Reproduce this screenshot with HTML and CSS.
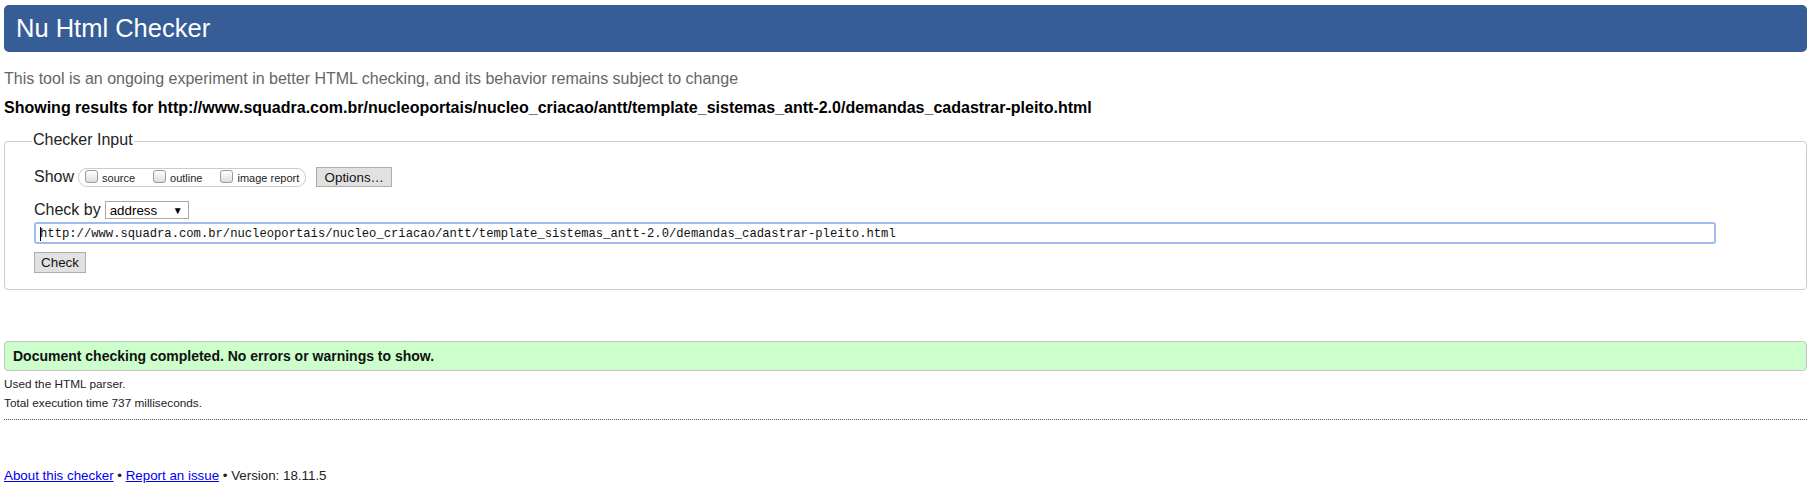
FILE: index.html
```html
<!DOCTYPE html>
<html lang="en">
<head>
<meta charset="utf-8">
<title>Nu Html Checker</title>
<link rel="stylesheet" href="styles.css">
</head>
<body>
<h1 class="title">Nu Html Checker</h1>
<p class="intro">This tool is an ongoing experiment in better HTML checking, and its behavior remains subject to change</p>
<p class="results-for">Showing results for http://www.squadra.com.br/nucleoportais/nucleo_criacao/antt/template_sistemas_antt-2.0/demandas_cadastrar-pleito.html</p>
<fieldset class="checker">
  <legend class="checker-legend">Checker Input</legend>
  <div class="row show-row">
    <span class="lbl">Show</span>
    <span class="opts">
      <span class="opt"><span class="cb"></span>source</span>
      <span class="opt"><span class="cb"></span>outline</span>
      <span class="opt"><span class="cb"></span>image report</span>
    </span>
    <span class="btn btn-options">Options…</span>
  </div>
  <div class="row by-row">
    <span class="lbl">Check by</span>
    <span class="select">address<span class="arrow">▼</span></span>
  </div>
  <div class="url"><span class="caret"></span>http://www.squadra.com.br/nucleoportais/nucleo_criacao/antt/template_sistemas_antt-2.0/demandas_cadastrar-pleito.html</div>
  <div class="row"><span class="btn btn-check">Check</span></div>
</fieldset>
<p class="success">Document checking completed. No errors or warnings to show.</p>
<p class="details">Used the HTML parser.</p>
<p class="details stats">Total execution time 737 milliseconds.</p>
<p class="footer"><a href="#" class="link">About this checker</a> • <a href="#" class="link">Report an issue</a> • Version: 18.11.5</p>
</body>
</html>
```
FILE: styles.css
```css
html, body {
  background: #fff;
}
body {
  margin: 0;
  padding: 5px 4px 0 4px;
  font-family: "Liberation Sans", Arial, sans-serif;
  color: #000;
  font-size: 16px;
}
.title {
  margin: 0;
  height: 47px;
  line-height: 46px;
  padding: 0 12px;
  background: #365d95;
  color: #fff;
  font-weight: normal;
  font-size: 25.5px;
  border-radius: 5px;
}
.intro {
  margin: 17px 0 0;
  line-height: 20px;
  color: #666;
}
.results-for {
  margin: 9px 0 0;
  line-height: 20px;
  font-weight: bold;
}
.checker {
  margin: 13px 0 0;
  padding: 0 28px 16px 29px;
  border: 1px solid #ccc;
  border-radius: 4px;
  min-width: 0;
}
.checker-legend {
  padding: 0 1px 2px;
  margin-left: -2px;
  line-height: 18px;
  color: #222;
}
.row {
  display: flex;
  align-items: center;
}
.show-row {
  margin-top: 16px;
  height: 20px;
}
.lbl {
  line-height: 20px;
  color: #222;
}
.opts {
  display: flex;
  align-items: flex-start;
  margin-left: 4px;
  height: 17px;
  padding: 0 6px 0 6px;
  border: 1px solid #ccc;
  border-radius: 9px;
  gap: 18px;
}
.opt {
  display: flex;
  align-items: flex-start;
  font-size: 11px;
  line-height: 17px;
  padding-top: 1px;
  color: #222;
}
.cb {
  width: 11px;
  height: 11px;
  margin: 0 4px 0 0;
  border: 1px solid #9a9a9a;
  border-radius: 3px;
  background: linear-gradient(#fff, #dcdcdc);
}
.btn {
  display: inline-flex;
  align-items: center;
  justify-content: center;
  box-sizing: border-box;
  border: 1px solid #adadad;
  background: #e1e1e1;
  color: #111;
  font-size: 13.33px;
}
.btn-options {
  margin-left: 10px;
  width: 76px;
  height: 20px;
}
.by-row {
  margin-top: 13px;
  height: 20px;
}
.select {
  display: inline-flex;
  align-items: center;
  box-sizing: border-box;
  margin-left: 4px;
  width: 84px;
  height: 18px;
  padding-left: 4px;
  border: 1px solid #a9a9a9;
  font-size: 13.33px;
  color: #000;
}
.arrow {
  margin-left: auto;
  margin-right: 5px;
  font-size: 10px;
}
.url {
  margin-top: 2px;
  box-sizing: border-box;
  width: 1682px;
  height: 22px;
  display: flex;
  align-items: center;
  padding-left: 4px;
  padding-top: 1px;
  border: 2px solid #9ebcf0;
  border-radius: 3px;
  font-family: "Liberation Mono", Consolas, monospace;
  font-size: 12.2px;
  color: #111;
  white-space: nowrap;
}
.caret {
  width: 1px;
  height: 14px;
  background: #000;
  margin-right: -1px;
}
.btn-check {
  margin-top: 8px;
  width: 52px;
  height: 21px;
}
.success {
  margin: 51px 0 0;
  height: 30px;
  box-sizing: border-box;
  display: flex;
  align-items: center;
  padding: 0 8px;
  background: #ccffcc;
  border: 1px solid #c4c4c4;
  border-radius: 4px;
  font-weight: bold;
  font-size: 14px;
  color: #111;
}
.details {
  margin: 0;
  font-size: 11.8px;
  line-height: 19px;
  color: #222;
}
.success + .details {
  margin-top: 4px;
}
.stats {
  padding-bottom: 6px;
  border-bottom: 1px dotted #555;
}
.footer {
  margin: 47px 0 0;
  font-size: 13.33px;
  line-height: 18px;
  color: #222;
}
.link {
  color: #0000ee;
  text-decoration: underline;
}
```
